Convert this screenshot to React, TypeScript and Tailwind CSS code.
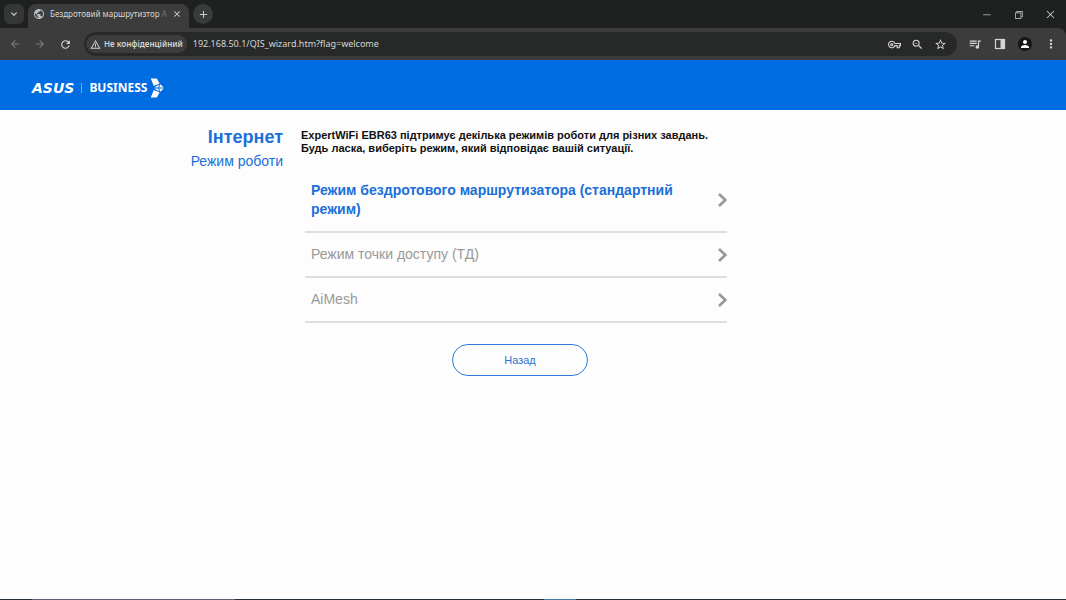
import { FiPlus } from "react-icons/fi";
import {
  MdArrowBack, MdArrowForward, MdRefresh, MdClose, MdExpandMore, MdPublic, MdWarningAmber,
  MdOutlineVpnKey, MdZoomOut, MdStarBorder, MdQueueMusic, MdPerson, MdMoreVert,
} from "react-icons/md";
import { VscChromeMinimize, VscChromeRestore, VscChromeClose } from "react-icons/vsc";

const modes = [
  { id: "router", label: "Режим бездротового маршрутизатора (стандартний режим)", active: true },
  { id: "ap", label: "Режим точки доступу (ТД)", active: false },
  { id: "aimesh", label: "AiMesh", active: false },
];

function TabStrip() {
  return (
    <div className="flex h-7 items-end text-[#d5d6d5]">
      <button aria-label="Пошук вкладок" className="mb-1 ml-1 grid size-5 place-items-center rounded-md bg-[#353736]">
        <MdExpandMore className="size-3" />
      </button>
      <div className="ml-1 flex h-6 w-[161px] items-center rounded-t-lg bg-[#3b3c3b] pr-1 pb-1 pl-[5px]">
        <MdPublic className="size-3 shrink-0 text-[#b9bfc4]" />
        <span className="ml-[5px] flex-1 text-[8px] whitespace-nowrap">
          Бездротовий маршрутизтор <span className="text-[#747574]">A</span>
        </span>
        <button aria-label="Закрити вкладку" className="grid size-4 shrink-0 place-items-center">
          <MdClose className="size-[10px]" />
        </button>
      </div>
      <button aria-label="Нова вкладка" className="mb-1 ml-1 grid size-5 place-items-center rounded-full bg-[#3a3c3b]">
        <FiPlus className="size-[11px]" />
      </button>
      <div className="ml-auto flex h-7 items-center">
        <button aria-label="Згорнути" className="grid w-8 place-items-center"><VscChromeMinimize className="size-[11px]" /></button>
        <button aria-label="Відновити" className="grid w-8 place-items-center"><VscChromeRestore className="size-[11px]" /></button>
        <button aria-label="Закрити" className="grid w-8 place-items-center"><VscChromeClose className="size-[11px]" /></button>
      </div>
    </div>
  );
}

function Toolbar() {
  return (
    <div className="flex h-8 items-center rounded-tr-lg bg-[#3b3c3b] text-[#d5d6d5]">
      <div className="flex w-[84px] items-center gap-[13px] pl-[9px]">
        <button aria-label="Назад у браузері" className="text-[#7c7e7d]"><MdArrowBack className="size-3" /></button>
        <button aria-label="Вперед" className="text-[#7c7e7d]"><MdArrowForward className="size-3" /></button>
        <button aria-label="Оновити"><MdRefresh className="size-[13px]" /></button>
      </div>
      <div className="flex h-6 flex-1 items-center rounded-full bg-[#272928] pr-[10px] pl-[2px]">
        <button className="flex h-[18px] items-center gap-[3px] rounded-full bg-[#3b3c3b] px-1 text-[8px] font-semibold whitespace-nowrap">
          <MdWarningAmber className="size-[11px]" />
          Не конфіденційний
        </button>
        <input
          aria-label="Адресний рядок"
          defaultValue="192.168.50.1/QIS_wizard.htm?flag=welcome"
          className="ml-[6px] min-w-0 flex-1 bg-transparent text-[9px] outline-none"
        />
        <div className="flex items-center gap-[10px]">
          <button aria-label="Паролі"><MdOutlineVpnKey className="size-[13px]" /></button>
          <button aria-label="Масштаб"><MdZoomOut className="size-[13px]" /></button>
          <button aria-label="Додати закладку"><MdStarBorder className="size-[13px]" /></button>
        </div>
      </div>
      <div className="flex items-center gap-3 pr-2 pl-[11px]">
        <button aria-label="Керування медіа"><MdQueueMusic className="size-[14px]" /></button>
        <button aria-label="Бічна панель">
          <svg viewBox="0 0 12 12" className="size-3">
            <rect x="1.5" y="1.5" width="9" height="9" fill="none" stroke="currentColor" strokeWidth="1.2" />
            <rect x="6.5" y="1.5" width="4" height="9" fill="currentColor" />
          </svg>
        </button>
        <button aria-label="Профіль" className="grid size-[14px] place-items-center rounded-full bg-[#151716] text-white">
          <MdPerson className="size-3" />
        </button>
        <button aria-label="Меню"><MdMoreVert className="size-[14px]" /></button>
      </div>
    </div>
  );
}

function Brand() {
  return (
    <header className="flex h-[50px] items-center bg-[#006ce1] pt-[6px] pl-8 text-white">
      <span className="font-['DejaVu_Sans',sans-serif] text-[14px] leading-5 font-bold italic">ASUS</span>
      <span className="mx-[7px] h-[10px] w-px bg-[#6ba9ee]" />
      <span className="font-['Noto_Sans',sans-serif] text-[12px] leading-5 font-bold">BUSINESS</span>
      <svg viewBox="0 0 14 20" className="ml-[3px] h-5 w-[14px]" fill="currentColor">
        <path d="M0.8 0.5H6.8L9.6 5.4L3.8 8Z" />
        <path d="M10.2 6.2L13.8 9.6H9.2Z" />
        <path d="M9.2 6.6L8.2 9.6H4.4Z" />
        <path d="M9.2 10.4H13.8L10.2 13.8Z" />
        <path d="M4.4 10.4H8.2L9.2 13.4Z" />
        <path d="M3.8 12L9.6 14.6L6.8 19.5H0.8Z" />
      </svg>
    </header>
  );
}

export default function App() {
  return (
    <div className="flex min-h-screen flex-col bg-[#fdfdfd] font-['Liberation_Sans',Arial,sans-serif]">
      <div className="bg-[#1f2120] font-['Noto_Sans',sans-serif]">
        <TabStrip />
        <Toolbar />
      </div>
      <Brand />

      <main className="flex flex-1 gap-[18px] pt-4">
        <div className="w-[283px] shrink-0 text-right text-[#1a6fd8]">
          <h1 className="text-[18px] leading-[22px] font-bold">Інтернет</h1>
          <h2 className="mt-[2px] text-[14px] leading-[22px]">Режим роботи</h2>
        </div>

        <section className="w-full max-w-[426px]">
          <p className="mt-[3px] text-[11px] leading-[13px] font-bold text-[#111]">
            ExpertWiFi EBR63 підтримує декілька режимів роботи для різних завдань.
            <br />
            Будь ласка, виберіть режим, який відповідає вашій ситуації.
          </p>
          <div className="mt-[14px] ml-1">
            {modes.map((mode) => (
              <button
                key={mode.id}
                className="flex w-full items-center justify-between border-b-2 border-[#dedede] py-3 pl-[6px] text-left"
              >
                <span className={mode.active ? "max-w-[380px] text-[14px] leading-[19px] font-bold text-[#1a6fd8]" : "text-[14px] leading-[19px] text-[#999]"}>
                  {mode.label}
                </span>
                <svg viewBox="0 0 10 14" className="h-[14px] w-[10px] text-[#979797]" fill="none" stroke="currentColor" strokeWidth="2.6">
                  <path d="M2 1L8.4 7L2 13" />
                </svg>
              </button>
            ))}
          </div>
          <div className="mt-[21px] flex justify-center pl-3">
            <button className="h-8 w-[136px] rounded-full border border-[#2f7bdc] text-[11px] text-[#2f72cf]">Назад</button>
          </div>
        </section>
      </main>

      {/* Upper edge of the system taskbar */}
      <footer className="flex h-px bg-[#25303a]">
        <div className="ml-[3%] w-[19%] bg-[#5c6270]" />
        <div className="ml-[29%] w-[3%] bg-[#3f7cae]" />
      </footer>
    </div>
  );
}
